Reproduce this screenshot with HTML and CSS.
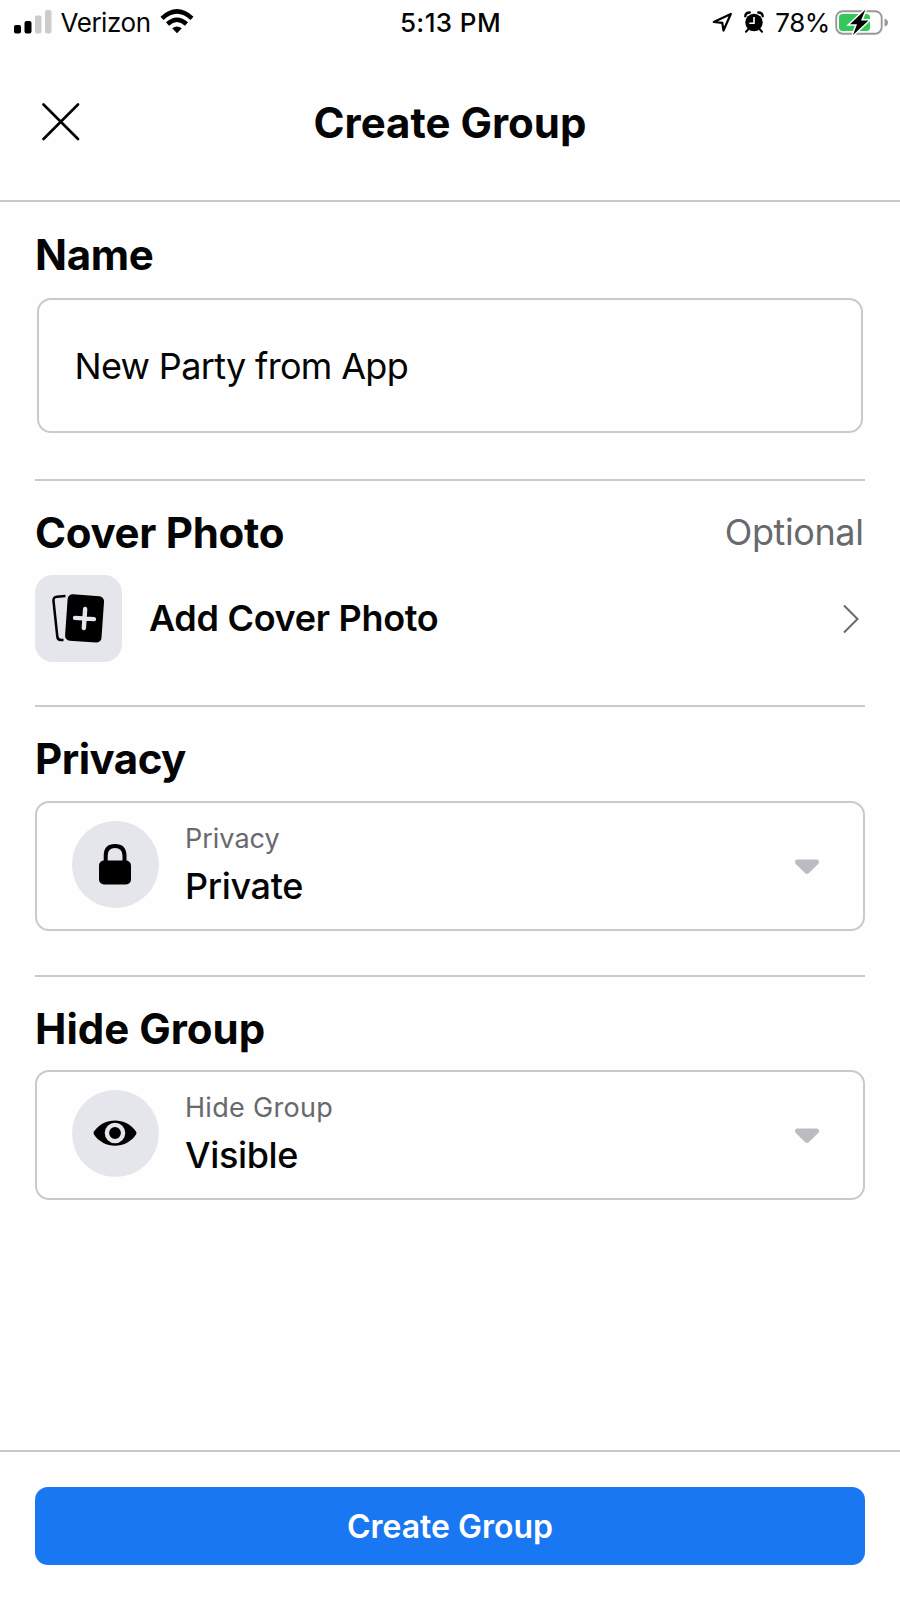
FILE: index.html
```html
<!DOCTYPE html>
<html lang="en">
<head>
<meta charset="utf-8">
<title>Create Group</title>
<link rel="stylesheet" href="styles.css">
</head>
<body>
<div class="screen">
  <div class="status">
    <div class="status-left">
      <svg class="signal" width="38" height="24" viewBox="0 0 38 24"><rect x="0" y="15" width="7" height="8.500" rx="2"/><rect x="10.500" y="11" width="7" height="12.500" rx="2"/><rect x="21" y="5.500" width="6.500" height="18" rx="2" fill="#ccc"/><rect x="31" y="0" width="6.500" height="23.500" rx="2" fill="#ccc"/></svg>
      <span class="carrier">Verizon</span>
      <svg class="wifi" width="34" height="25" viewBox="0 0 34 25"><g fill="none" stroke="#000" stroke-width="4.500"><path d="M2 9.300Q17-4.500 32 9.300"/><path d="M7.500 15Q17 6.500 26.500 15"/></g><path d="M12.200 19.300Q17 15.500 21.800 19.300L17 24.300Z"/></svg>
    </div>
    <span class="time">5:13 PM</span>
    <div class="status-right">
      <svg class="locate" width="21" height="21" viewBox="0 0 21 21"><path d="M1.800 10L18.800 2L11.500 18.500L10.300 10.800Z" fill="none" stroke="#000" stroke-width="2.200" stroke-linejoin="round"/></svg>
      <svg class="alarm" width="20" height="22" viewBox="0 0 20 22"><circle cx="10" cy="11.500" r="8.700"/><path d="M1.300 5.300Q1.500 1.500 5.700 1.500M18.700 5.300Q18.500 1.500 14.300 1.500" fill="none" stroke="#000" stroke-width="2.400" stroke-linecap="round"/><path d="M4.500 18L2 20.700M15.500 18L18 20.700" stroke="#000" stroke-width="2" stroke-linecap="round"/><path d="M10 6V12.200H5.300" fill="none" stroke="#fff" stroke-width="1.600"/></svg>
      <span class="percent">78%</span>
      <svg class="battery" width="54" height="28" viewBox="0 0 54 28"><rect x="1.200" y="3.200" width="45.500" height="22.500" rx="6.500" fill="#fff" stroke="#999" stroke-width="1.900"/><rect x="4" y="6" width="31" height="17" rx="3.500" fill="#34c759"/><path d="M49.500 10.500Q53 11.500 53 14.500T49.500 18.500Z" fill="#999"/><path d="M30.500 1.500L15 16.200H22L18 27L33.500 12.600H26Z" stroke="#fff" stroke-width="3" paint-order="stroke"/></svg>
    </div>
  </div>

  <header class="header">
    <svg class="close" width="38" height="38" viewBox="0 0 38 38"><path d="M1.500 1.500L36 36M36 1.500L1.500 36" stroke="#000" stroke-width="2.600" stroke-linecap="round"/></svg>
    <h1 class="title">Create Group</h1>
  </header>

  <main class="content">
    <section class="section">
      <h2 class="heading h-name">Name</h2>
      <div class="input"><span class="input-text">New Party from App</span></div>
    </section>
    <section class="section section-cover">
      <div class="heading-row"><h2 class="heading h-cover">Cover Photo</h2><span class="optional">Optional</span></div>
      <div class="cover-row">
        <div class="tile"><svg width="86" height="86" viewBox="0 0 86 86"><path d="M30.500 21L22 21.700Q18 22 18.500 26L22.300 61.500Q22.700 65 26 65H28.500" fill="none" stroke="#000" stroke-width="2.500"/><g transform="rotate(4 49.500 43.500)"><rect x="31.300" y="20.200" width="36.500" height="46.500" rx="5"/><path d="M49.500 34V53M40 43.500H59" stroke="#e5e5ec" stroke-width="4.400" stroke-linecap="round"/></g></svg></div>
        <span class="cover-label">Add Cover Photo</span>
        <svg class="chevron" width="18" height="30" viewBox="0 0 18 30"><path d="M2 1.500L15.500 15L2 28.500" fill="none" stroke="#68696c" stroke-width="2"/></svg>
      </div>
    </section>
    <section class="section">
      <h2 class="heading h-privacy">Privacy</h2>
      <div class="select">
        <div class="circle"><svg width="86" height="86" viewBox="0 0 86 86"><rect x="27" y="39.500" width="32" height="24" rx="5"/><path d="M33.700 42V34.500Q33.700 25 43 25T52.500 34.500V42" fill="none" stroke="#000" stroke-width="4"/></svg></div>
        <div class="select-text"><span class="label l-privacy">Privacy</span><span class="value v-private">Private</span></div>
        <svg class="caret" width="26" height="16" viewBox="0 0 26 16"><path d="M3.500 .5H22.500Q25 .5 25 3Q25 4 24.200 5L15 14Q13 16 11 14L1.800 5Q1 4 1 3Q1 .5 3.500 .5Z" fill="#bbbcc1"/></svg>
      </div>
    </section>
    <section class="section last">
      <h2 class="heading h-hide">Hide Group</h2>
      <div class="select">
        <div class="circle"><svg width="86" height="86" viewBox="0 0 86 86"><path d="M22 41.500C32 26.800 54 26.800 64 41.500Q65 43 64 44.500C54 59.500 32 59.500 22 44.500Q21 43 22 41.500Z"/><circle cx="43" cy="43" r="8.100" fill="none" stroke="#e5e5ec" stroke-width="4.400"/></svg></div>
        <div class="select-text"><span class="label l-hide">Hide Group</span><span class="value v-visible">Visible</span></div>
        <svg class="caret" width="26" height="16" viewBox="0 0 26 16"><path d="M3.500 .5H22.500Q25 .5 25 3Q25 4 24.200 5L15 14Q13 16 11 14L1.800 5Q1 4 1 3Q1 .5 3.500 .5Z" fill="#bbbcc1"/></svg>
      </div>
    </section>
  </main>

  <footer class="footer"><button class="submit">Create Group</button></footer>
</div>
</body>
</html>
```

FILE: styles.css
```css
* { box-sizing: border-box; }
body { margin: 0; background: #fefefe; color: #050505; font-family: Inter, "Liberation Sans", sans-serif; }
svg { display: block; flex: none; }
h1, h2 { margin: 0; }
span { white-space: nowrap; }
.screen { width: 900px; height: 1600px; display: flex; flex-direction: column; overflow: hidden; }

.status { height: 46px; flex: none; display: grid; grid-template-columns: 1fr auto 1fr; font-size: 26px; line-height: 46px; padding: 0 11px 0 14px; }
.status-left, .status-right { display: flex; align-items: flex-start; }
.status-right { justify-content: flex-end; }
.signal { margin-top: 10px; }
.carrier { margin-left: 8.500px; letter-spacing: -0.45px; }
.wifi { margin: 9px 0 0 9.500px; }
.time { font-weight: 500; letter-spacing: 0.4px; margin-left: -2px; }
.locate { margin: 12px 11px 0 0; }
.alarm { margin: 11px 11px 0 0; }
.percent { letter-spacing: -0.4px; }
.battery { margin: 8px 0 0 5px; }

.header { height: 156px; flex: none; border-bottom: 2px solid #c9c9c9; display: grid; grid-template-columns: 200px 1fr 200px; }
.close { margin: 57px 0 0 42px; }
.title { text-align: center; font-size: 42px; line-height: 48px; font-weight: 700; margin-top: 53px; letter-spacing: 0; }

.content { flex: 1; padding: 1px 35px 0; }
.section { border-bottom: 2px solid #c9cacd; padding: 28px 0 44px; }
.section:first-child { padding-bottom: 46px; }
.section-cover { padding-bottom: 43px; }
.last { border-bottom: 0; }
.heading { font-size: 42px; line-height: 48px; font-weight: 700; letter-spacing: -0.3px; margin-bottom: 18px; }
.h-name { margin-bottom: 19px; }
.h-privacy { letter-spacing: -0.5px; }
.h-hide { margin-bottom: 17px; letter-spacing: 0; }
.input { height: 135px; margin: 0 2px; border: 2px solid #c9cacd; border-radius: 14px; padding: 0 35.500px; display: flex; align-items: center; }
.input-text { font-size: 36px; letter-spacing: -0.67px; }
.heading-row { display: flex; justify-content: space-between; }
.optional { font-size: 36px; line-height: 46px; color: #68696c; margin-right: 1.500px; letter-spacing: -0.4px; }
.cover-row { display: flex; align-items: center; }
.tile { width: 87px; height: 87px; border-radius: 18px; background: #e5e5ec; }
.cover-label { font-size: 36px; font-weight: 600; margin: -2px 0 0 27px; flex: 1; letter-spacing: -0.3px; }
.chevron { margin-right: 5px; }
.select { height: 130px; border: 2px solid #c9cacd; border-radius: 14px; padding: 0 43px 0 35px; display: flex; align-items: center; }
.circle { width: 87px; height: 87px; border-radius: 50%; background: #e5e5ec; margin-top: -4px; }
.select-text { flex: 1; margin-left: 26px; display: flex; flex-direction: column; }
.label { font-size: 27px; line-height: 40px; color: #68696c; }
.l-hide { letter-spacing: 0.3px; }
.value { font-size: 36px; line-height: 54px; font-weight: 500; letter-spacing: -0.35px; }
.caret { margin-top: 2px; }

.footer { height: 150px; flex: none; border-top: 2px solid #c9c9c9; padding: 35px 35px 0; }
.submit { display: block; width: 100%; height: 78px; border: 0; border-radius: 13px; background: #1a77f2; color: #fff; font: 600 32px/78px Inter, "Liberation Sans", sans-serif; padding: 1px 0 0; }
```
